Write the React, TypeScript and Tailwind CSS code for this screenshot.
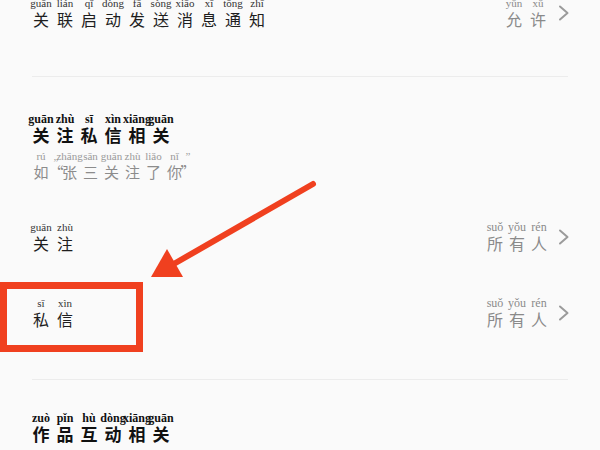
import React from "react";

type Item = [string, string, string?];

const HZ = "font-['Noto_Sans_CJK_SC','Noto_Sans',sans-serif]";
const PY = "font-['Liberation_Serif','DejaVu_Serif',serif]";

function Ruby({
  items,
  pyCls,
  hzCls,
}: {
  items: Item[];
  pyCls: string;
  hzCls: string;
}) {
  return (
    <div className="flex">
      {items.map(([h, p, w], i) => (
        <div key={i} className={`flex flex-col items-center ${w ?? "w-6"}`}>
          <span className={`h-3 whitespace-nowrap leading-[12px] ${PY} ${pyCls}`}>{p}</span>
          <span className={`h-5 whitespace-nowrap leading-5 ${HZ} ${hzCls}`}>{h}</span>
        </div>
      ))}
    </div>
  );
}

function Chevron() {
  return (
    <svg width="12" height="16" viewBox="0 0 12 16" className="ml-2 shrink-0">
      <polyline points="2,1.5 9.5,8 2,14.5" fill="none" stroke="#9b9b9b" strokeWidth="2" strokeLinecap="round" strokeLinejoin="round" />
    </svg>
  );
}

function Row({ left, right }: { left: React.ReactNode; right?: React.ReactNode }) {
  return (
    <div className="flex items-center justify-between pl-[29px] pr-[30px]">
      {left}
      {right && (
        <div className="flex items-center">
          {right}
          <Chevron />
        </div>
      )}
    </div>
  );
}

const everyone: Item[] = [
  ["所", "suǒ", "w-[22px]"],
  ["有", "yǒu", "w-[22px]"],
  ["人", "rén", "w-[22px]"],
];

export default function App() {
  return (
    <div className="relative h-[450px] w-[600px] overflow-hidden bg-[#fafafa]">
      <div className="mt-[-3px] flex flex-col">
        <Row
          left={
            <Ruby
              pyCls="text-[11px] text-[#333]"
              hzCls="text-[16px] text-[#1e1e1e]"
              items={[
                ["关", "guān"],
                ["联", "lián"],
                ["启", "qǐ"],
                ["动", "dòng"],
                ["发", "fā"],
                ["送", "sòng"],
                ["消", "xiāo"],
                ["息", "xī"],
                ["通", "tōng"],
                ["知", "zhī"],
              ]}
            />
          }
          right={
            <Ruby
              pyCls="text-[11px] text-[#8a8a8a]"
              hzCls="text-[16px] text-[#8a8a8a]"
              items={[
                ["允", "yǔn"],
                ["许", "xǔ"],
              ]}
            />
          }
        />

        <div className="mx-[32px] mt-[47px] h-px bg-[#ececec]" />

        <div className="mt-[36px]">
          <Row
            left={
              <Ruby
                pyCls="text-[12px] font-bold text-[#111]"
                hzCls="text-[17px] font-bold text-[#111]"
                items={[
                  ["关", "guān"],
                  ["注", "zhù"],
                  ["私", "sī"],
                  ["信", "xìn"],
                  ["相", "xiāng"],
                  ["关", "guān"],
                ]}
              />
            }
          />
        </div>

        <div className="mt-[5px]">
          <Row
            left={
              <Ruby
                pyCls="text-[11px] text-[#999]"
                hzCls="text-[15px] text-[#8c8c8c]"
                items={[
                  ["如", "rú"],
                  ["“", "„", "w-[6px]"],
                  ["张", "zhāng", "w-[21px]"],
                  ["三", "sān", "w-[21px]"],
                  ["关", "guān", "w-[21px]"],
                  ["注", "zhù", "w-[21px]"],
                  ["了", "liǎo", "w-[21px]"],
                  ["你", "nǐ", "w-[21px]"],
                  ["”", "”", "w-[6px]"],
                ]}
              />
            }
          />
        </div>

        <div className="mt-[39px]">
          <Row
            left={
              <Ruby
                pyCls="text-[11px] text-[#333]"
                hzCls="text-[16px] text-[#1e1e1e]"
                items={[
                  ["关", "guān"],
                  ["注", "zhù"],
                ]}
              />
            }
            right={<Ruby pyCls="text-[12px] text-[#8a8a8a]" hzCls="text-[16px] text-[#8a8a8a]" items={everyone} />}
          />
        </div>

        <div className="mt-[44px]">
          <Row
            left={
              <Ruby
                pyCls="text-[11px] text-[#333]"
                hzCls="text-[16px] text-[#1e1e1e]"
                items={[
                  ["私", "sī"],
                  ["信", "xìn"],
                ]}
              />
            }
            right={<Ruby pyCls="text-[12px] text-[#8a8a8a]" hzCls="text-[16px] text-[#8a8a8a]" items={everyone} />}
          />
        </div>

        <div className="mx-[32px] mt-[50px] h-px bg-[#ececec]" />

        <div className="mt-[32px]">
          <Row
            left={
              <Ruby
                pyCls="text-[12px] font-bold text-[#111]"
                hzCls="text-[17px] font-bold text-[#111]"
                items={[
                  ["作", "zuò"],
                  ["品", "pǐn"],
                  ["互", "hù"],
                  ["动", "dòng"],
                  ["相", "xiāng"],
                  ["关", "guān"],
                ]}
              />
            }
          />
        </div>
      </div>

      {/* annotation box */}
      <div className="pointer-events-none absolute left-0 top-[282px] h-[70px] w-[143px] border-[7px] border-[#f0401f]" />

      {/* annotation arrow */}
      <svg className="pointer-events-none absolute left-0 top-0" width="600" height="450" viewBox="0 0 600 450">
        <line x1="313" y1="184" x2="172" y2="265" stroke="#f0401f" strokeWidth="6" strokeLinecap="round" />
        <polygon points="151,277 167,249 183,277" fill="#f0401f" />
      </svg>
    </div>
  );
}
